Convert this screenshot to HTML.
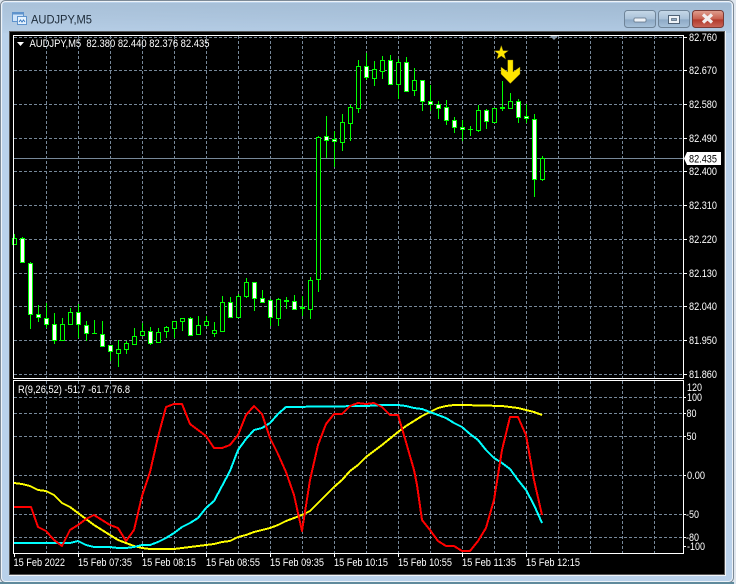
<!DOCTYPE html>
<html><head><meta charset="utf-8"><style>
html,body{margin:0;padding:0;width:736px;height:584px;overflow:hidden;background:#fff}
svg{display:block}
text{font-family:"Liberation Sans",sans-serif}
</style></head><body>
<svg width="736" height="584" viewBox="0 0 736 584" xmlns="http://www.w3.org/2000/svg">
<defs>
<linearGradient id="gl" x1="0" y1="0" x2="1" y2="0"><stop offset="0" stop-color="#b4cbe2"/><stop offset=".5" stop-color="#aac3dc"/><stop offset="1" stop-color="#a3bdd6"/></linearGradient>
<linearGradient id="t" x1="0" y1="0" x2="0" y2="1"><stop offset="0" stop-color="#9db6ce" stop-opacity=".7"/><stop offset="1" stop-color="#b9d1ea" stop-opacity="1"/></linearGradient>
<linearGradient id="b1" x1="0" y1="0" x2="0" y2="1"><stop offset="0" stop-color="#c6d8e8"/><stop offset=".5" stop-color="#a9c1d8"/><stop offset=".55" stop-color="#8eaac6"/><stop offset="1" stop-color="#a8c2da"/></linearGradient>
<linearGradient id="b2" x1="0" y1="0" x2="0" y2="1"><stop offset="0" stop-color="#e0a090"/><stop offset=".5" stop-color="#c8604f"/><stop offset=".55" stop-color="#b23a2c"/><stop offset="1" stop-color="#c9675a"/></linearGradient>
</defs>
<!-- window -->
<rect width="736" height="584" fill="#dfe6ee"/>
<rect x="0.5" y="0.5" width="733" height="582" rx="5" fill="#b9d1ea" stroke="#7d8a97"/>
<rect x="1.5" y="1.5" width="731" height="580" rx="4" fill="#b9d1ea" stroke="#eef3f8"/>
<rect x="3" y="3" width="728" height="30" fill="url(#gl)"/>
<rect x="3" y="3" width="728" height="30" fill="url(#t)" opacity=".6"/>
<rect x="0" y="582" width="736" height="2" fill="#5f8a9c"/>
<rect x="734" y="0" width="2" height="584" fill="#dfe6ee"/>
<!-- title icon -->
<rect x="12.5" y="12.5" width="11" height="9" fill="#cfe4fa" stroke="#5f93cc"/>
<rect x="12.5" y="12.5" width="11" height="2" fill="#5f93cc"/>
<rect x="17.5" y="16.5" width="9" height="8" fill="#e6f2fd" stroke="#5f93cc"/>
<path d="M19 22l1.500-2 1.500 2 1.500-2 1.500 2" fill="none" stroke="#3f7cc0"/>
<text x="31" y="23.500" font-size="12" fill="#1c2a38" textLength="61" lengthAdjust="spacingAndGlyphs">AUDJPY,M5</text>
<!-- buttons -->
<rect x="624.500" y="10.500" width="31" height="17" rx="3" fill="url(#b1)" stroke="#6f8498"/>
<rect x="634" y="18" width="12" height="4" rx="1" fill="#eef3f8" stroke="#5c6f82" stroke-width=".7"/>
<rect x="658.500" y="10.500" width="31" height="17" rx="3" fill="url(#b1)" stroke="#6f8498"/>
<rect x="668.500" y="15.500" width="11" height="8" fill="#eef3f8" stroke="#4f6276"/>
<rect x="671.500" y="18.500" width="5" height="2" fill="#8fa9c2" stroke="#4f6276" stroke-width=".7"/>
<rect x="692.500" y="10.500" width="31" height="17" rx="3" fill="url(#b2)" stroke="#7a3a34"/>
<path d="M703 14.500l9 8M712 14.500l-9 8" stroke="#f2eeee" stroke-width="3.200" fill="none"/>
<!-- client -->
<rect x="9" y="31" width="717" height="545" fill="#f0f4f8"/>
<rect x="9" y="31" width="716" height="544" fill="#555"/>
<rect x="10" y="32" width="714" height="542" fill="#000"/>
<!-- grid -->
<g stroke="#778899" stroke-dasharray="3 2" shape-rendering="crispEdges" fill="none">
<path d="M14 37.500H683M14 70.500H683M14 104.500H683M14 138.500H683M14 171.500H683M14 205.500H683M14 239.500H683M14 273.500H683M14 306.500H683M14 340.500H683M14 374.500H683"/>
<path d="M14 397.500H683M14 413.500H683M14 436.500H683M14 475.500H683M14 514.500H683M14 537.500H683"/>
<path d="M46.500 36V378M78.500 36V378M110.500 36V378M142.500 36V378M174.500 36V378M206.500 36V378M238.500 36V378M270.500 36V378M302.500 36V378M334.500 36V378M366.500 36V378M398.500 36V378M430.500 36V378M462.500 36V378M494.500 36V378M526.500 36V378M558.500 36V378M590.500 36V378M622.500 36V378M654.500 36V378"/>
<path d="M46.500 381V553M78.500 381V553M110.500 381V553M142.500 381V553M174.500 381V553M206.500 381V553M238.500 381V553M270.500 381V553M302.500 381V553M334.500 381V553M366.500 381V553M398.500 381V553M430.500 381V553M462.500 381V553M494.500 381V553M526.500 381V553M558.500 381V553M590.500 381V553M622.500 381V553M654.500 381V553"/>
</g>
<path d="M14 158.500H683" stroke="#778899" shape-rendering="crispEdges"/>
<!-- wicks -->
<path shape-rendering="crispEdges" stroke="#00ff00" fill="none" d="M14.500 234V245M22.500 237V262M30.500 262V329M38.500 305V322M46.500 303V328M54.500 313V344M62.500 318V340M70.500 308V324M78.500 304V338M86.500 321V341M94.500 320V333M102.500 321V346M110.500 345V361M118.500 340V367M126.500 341V354M134.500 328V345M142.500 323V335M150.500 327V345M158.500 328V342M166.500 326V338M174.500 321V338M182.500 318V331M190.500 317V335M198.500 316V334M206.500 316V326M214.500 322V337M222.500 296V332M230.500 297V318M238.500 294V317M246.500 278V298M254.500 282V311M262.500 290V303M270.500 299V326M278.500 298V326M286.500 297V309M294.500 295V310M302.500 296V316M310.500 277V319M318.500 136V292M326.500 116V158M334.500 131V167M342.500 114V151M350.500 105V141M358.500 60V113M366.500 53V80M374.500 61V86M382.500 56V79M390.500 55V84M398.500 59V99M406.500 57V92M414.500 68V96M422.500 80V111M430.500 85V111M438.500 101V119M446.500 100V125M454.500 117V133M462.500 120V141M470.500 126V136M478.500 105V132M486.500 109V129M494.500 108V122M502.500 81V111M510.500 93V108M518.500 99V123M526.500 104V123M534.500 114V197M542.500 156V181"/>
<!-- hollow bodies -->
<g shape-rendering="crispEdges" stroke="#00ff00" fill="#000">
<rect x="12.500" y="238.500" width="4" height="6"/>
<rect x="60.500" y="324.500" width="4" height="16"/>
<rect x="68.500" y="312.500" width="4" height="12"/>
<rect x="116.500" y="349.500" width="4" height="4"/>
<rect x="124.500" y="343.500" width="4" height="6"/>
<rect x="132.500" y="336.500" width="4" height="8"/>
<rect x="140.500" y="331.500" width="4" height="4"/>
<rect x="156.500" y="332.500" width="4" height="10"/>
<rect x="164.500" y="327.500" width="4" height="4"/>
<rect x="172.500" y="321.500" width="4" height="7"/>
<rect x="180.500" y="318.500" width="4" height="3"/>
<rect x="196.500" y="325.500" width="4" height="9"/>
<rect x="204.500" y="321.500" width="4" height="4"/>
<rect x="212.500" y="330.500" width="4" height="3"/>
<rect x="220.500" y="302.500" width="4" height="29"/>
<rect x="236.500" y="296.500" width="4" height="21"/>
<rect x="244.500" y="282.500" width="4" height="14"/>
<rect x="276.500" y="299.500" width="4" height="19"/>
<rect x="308.500" y="280.500" width="4" height="29"/>
<rect x="316.500" y="137.500" width="4" height="142"/>
<rect x="340.500" y="122.500" width="4" height="20"/>
<rect x="348.500" y="107.500" width="4" height="16"/>
<rect x="356.500" y="66.500" width="4" height="42"/>
<rect x="372.500" y="69.500" width="4" height="9"/>
<rect x="380.500" y="60.500" width="4" height="11"/>
<rect x="396.500" y="62.500" width="4" height="22"/>
<rect x="412.500" y="80.500" width="4" height="10"/>
<rect x="476.500" y="110.500" width="4" height="20"/>
<rect x="492.500" y="108.500" width="4" height="14"/>
<rect x="508.500" y="101.500" width="4" height="7"/>
<rect x="540.500" y="158.500" width="4" height="21"/>
</g>
<!-- filled bodies -->
<g shape-rendering="crispEdges" stroke="#00ff00" fill="#fff">
<rect x="20.500" y="238.500" width="4" height="24"/>
<rect x="28.500" y="263.500" width="4" height="51"/>
<rect x="36.500" y="314.500" width="4" height="3"/>
<rect x="44.500" y="318.500" width="4" height="6"/>
<rect x="52.500" y="324.500" width="4" height="16"/>
<rect x="76.500" y="312.500" width="4" height="12"/>
<rect x="84.500" y="325.500" width="4" height="8"/>
<rect x="100.500" y="334.500" width="4" height="12"/>
<rect x="108.500" y="345.500" width="4" height="6"/>
<rect x="148.500" y="331.500" width="4" height="12"/>
<rect x="188.500" y="318.500" width="4" height="17"/>
<rect x="228.500" y="302.500" width="4" height="15"/>
<rect x="252.500" y="282.500" width="4" height="16"/>
<rect x="260.500" y="298.500" width="4" height="4"/>
<rect x="268.500" y="300.500" width="4" height="17"/>
<rect x="292.500" y="301.500" width="4" height="8"/>
<rect x="324.500" y="136.500" width="4" height="4"/>
<rect x="332.500" y="139.500" width="4" height="2"/>
<rect x="364.500" y="66.500" width="4" height="11"/>
<rect x="388.500" y="60.500" width="4" height="24"/>
<rect x="404.500" y="62.500" width="4" height="29"/>
<rect x="420.500" y="80.500" width="4" height="21"/>
<rect x="428.500" y="101.500" width="4" height="3"/>
<rect x="436.500" y="104.500" width="4" height="4"/>
<rect x="444.500" y="107.500" width="4" height="13"/>
<rect x="452.500" y="120.500" width="4" height="7"/>
<rect x="460.500" y="127.500" width="4" height="2"/>
<rect x="484.500" y="110.500" width="4" height="11"/>
<rect x="500.500" y="107.500" width="4" height="1"/>
<rect x="516.500" y="101.500" width="4" height="16"/>
<rect x="524.500" y="116.500" width="4" height="2"/>
<rect x="532.500" y="119.500" width="4" height="60"/>
</g>
<!-- doji -->
<path shape-rendering="crispEdges" stroke="#00ff00" d="M92 333.500H97M300 307.500H305M300 308.500H305M284 300.500H289M284 301.500H289M468 129.500H473"/>
<!-- markers -->
<polygon points="501.300,45.500 503.100,50.600 508.400,50.700 504.200,53.900 505.700,59.100 501.300,56 496.900,59.100 498.400,53.900 494.200,50.700 499.500,50.600" fill="#ffe600" stroke="#7a6a00" stroke-width=".5"/>
<polygon points="507.700,60 513,60 513,72 520,67 520,74 510.300,83.500 501,74 501,67 507.700,72" fill="#ffe600" stroke="#8a7a00" stroke-width=".4"/>
<polygon points="550,36 558,36 554,40" fill="#8899aa"/>
<!-- indicator lines -->
<g fill="none" stroke-width="2" stroke-linejoin="round" shape-rendering="crispEdges">
<polyline stroke="#ffff00" points="14,483 22,484 30,486 38,490 46,491 54,495 62,503 70,507 78,513 86,519 94,525 102,530 110,535 118,540 126,543 134,546 142,548 150,549 158,549 166,549 174,549 182,548 190,547 198,546 206,545 214,544 222,542 230,541 238,537 246,535 254,532 262,530 270,528 278,525 286,521 294,518 302,515 310,511 318,503 326,495 334,487 342,480 350,471 358,465 366,457 382,445 398,432 406,426 414,421 422,416 430,412 438,408 446,406 454,405 462,405 502,406 510,407 518,408 526,410 534,412 542,415"/>
<polyline stroke="#00ffff" points="14,543 70,543 78,541 86,545 94,547 110,547 118,548 126,548 134,547 142,545 150,545 158,542 166,538 174,533 182,527 190,523 198,518 206,508 214,501 222,486 230,471 238,450 246,439 254,430 262,428 270,423 278,414 286,407 366,406 382,405 398,405 406,406 414,408 422,409 430,412 438,415 446,418 454,423 462,427 470,434 478,440 486,450 494,458 502,463 510,469 518,480 526,490 534,505 542,523"/>
<polyline stroke="#ff0000" points="14,507 31,507 38,527 46,531 54,540 62,546 70,530 78,525 86,519 94,515 102,520 110,525 118,528 126,541 134,530 142,496 150,472 158,437 166,407 174,404 182,404 190,424 198,430 206,436 214,448 222,448 230,445 238,435 246,415 254,406 262,414 270,438 278,454 286,472 294,495 302,531 310,480 318,445 326,424 334,414 342,414 350,406 358,403 366,404 374,403 382,407 390,415 398,415 406,442 414,470 417,485 422,520 430,530 438,541 446,546 454,546 462,551 470,551 478,541 486,528 494,500 502,450 510,417 518,417 526,435 534,480 542,515"/>
</g>
<!-- frames -->
<g fill="none" stroke="#fff" shape-rendering="crispEdges">
<rect x="13.500" y="35.500" width="670" height="343"/>
<rect x="13.500" y="380.500" width="670" height="173"/>
<path d="M684 37.500H687M684 70.500H687M684 104.500H687M684 138.500H687M684 171.500H687M684 205.500H687M684 239.500H687M684 273.500H687M684 306.500H687M684 340.500H687M684 374.500H687M684 397.500H686M684 413.500H686M684 436.500H686M684 475.500H686M684 514.500H686M684 537.500H686M684 546.500H686"/>
<path d="M14.500 554V557M78.500 554V557M142.500 554V557M206.500 554V557M270.500 554V557M334.500 554V557M398.500 554V557M462.500 554V557M526.500 554V557"/>
</g>
<!-- chart text -->
<polygon points="17,42 24,42 20.500,46" fill="#fff"/>
<g fill="#fff" font-size="11">
<text x="29.500" y="47" textLength="180" lengthAdjust="spacingAndGlyphs" xml:space="preserve">AUDJPY,M5  82.380 82.440 82.376 82.435</text>
<text x="18" y="393" textLength="112" lengthAdjust="spacingAndGlyphs">R(9,26,52) -51.7 -61.7 76.8</text>
<text x="689" y="41" textLength="28" lengthAdjust="spacingAndGlyphs">82.760</text>
<text x="689" y="74" textLength="28" lengthAdjust="spacingAndGlyphs">82.670</text>
<text x="689" y="108" textLength="28" lengthAdjust="spacingAndGlyphs">82.580</text>
<text x="689" y="142" textLength="28" lengthAdjust="spacingAndGlyphs">82.490</text>
<text x="689" y="175" textLength="28" lengthAdjust="spacingAndGlyphs">82.400</text>
<text x="689" y="209" textLength="28" lengthAdjust="spacingAndGlyphs">82.310</text>
<text x="689" y="243" textLength="28" lengthAdjust="spacingAndGlyphs">82.220</text>
<text x="689" y="277" textLength="28" lengthAdjust="spacingAndGlyphs">82.130</text>
<text x="689" y="310" textLength="28" lengthAdjust="spacingAndGlyphs">82.040</text>
<text x="689" y="344" textLength="28" lengthAdjust="spacingAndGlyphs">81.950</text>
<text x="689" y="378" textLength="28" lengthAdjust="spacingAndGlyphs">81.860</text>
<text x="687" y="391" textLength="15" lengthAdjust="spacingAndGlyphs">120</text>
<text x="687" y="401" textLength="15" lengthAdjust="spacingAndGlyphs">100</text>
<text x="686.500" y="417" textLength="10" lengthAdjust="spacingAndGlyphs">80</text>
<text x="686.500" y="440" textLength="10" lengthAdjust="spacingAndGlyphs">50</text>
<text x="687" y="479" textLength="18" lengthAdjust="spacingAndGlyphs">0.00</text>
<text x="686" y="518" textLength="13" lengthAdjust="spacingAndGlyphs">-50</text>
<text x="686" y="541" textLength="13" lengthAdjust="spacingAndGlyphs">-80</text>
<text x="687" y="550" textLength="18" lengthAdjust="spacingAndGlyphs">-100</text>
<text x="13.500" y="566" textLength="51.500" lengthAdjust="spacingAndGlyphs">15 Feb 2022</text>
<text x="78" y="566" textLength="54" lengthAdjust="spacingAndGlyphs">15 Feb 07:35</text>
<text x="142" y="566" textLength="54" lengthAdjust="spacingAndGlyphs">15 Feb 08:15</text>
<text x="206" y="566" textLength="54" lengthAdjust="spacingAndGlyphs">15 Feb 08:55</text>
<text x="270" y="566" textLength="54" lengthAdjust="spacingAndGlyphs">15 Feb 09:35</text>
<text x="334" y="566" textLength="54" lengthAdjust="spacingAndGlyphs">15 Feb 10:15</text>
<text x="398" y="566" textLength="54" lengthAdjust="spacingAndGlyphs">15 Feb 10:55</text>
<text x="462" y="566" textLength="54" lengthAdjust="spacingAndGlyphs">15 Feb 11:35</text>
<text x="526" y="566" textLength="54" lengthAdjust="spacingAndGlyphs">15 Feb 12:15</text>
</g>
<polygon points="684,158.500 687,152 721,152 721,165 687,165" fill="#fff"/>
<text x="689" y="162.500" font-size="11" fill="#000" textLength="28" lengthAdjust="spacingAndGlyphs">82.435</text>
</svg>
</body></html>
